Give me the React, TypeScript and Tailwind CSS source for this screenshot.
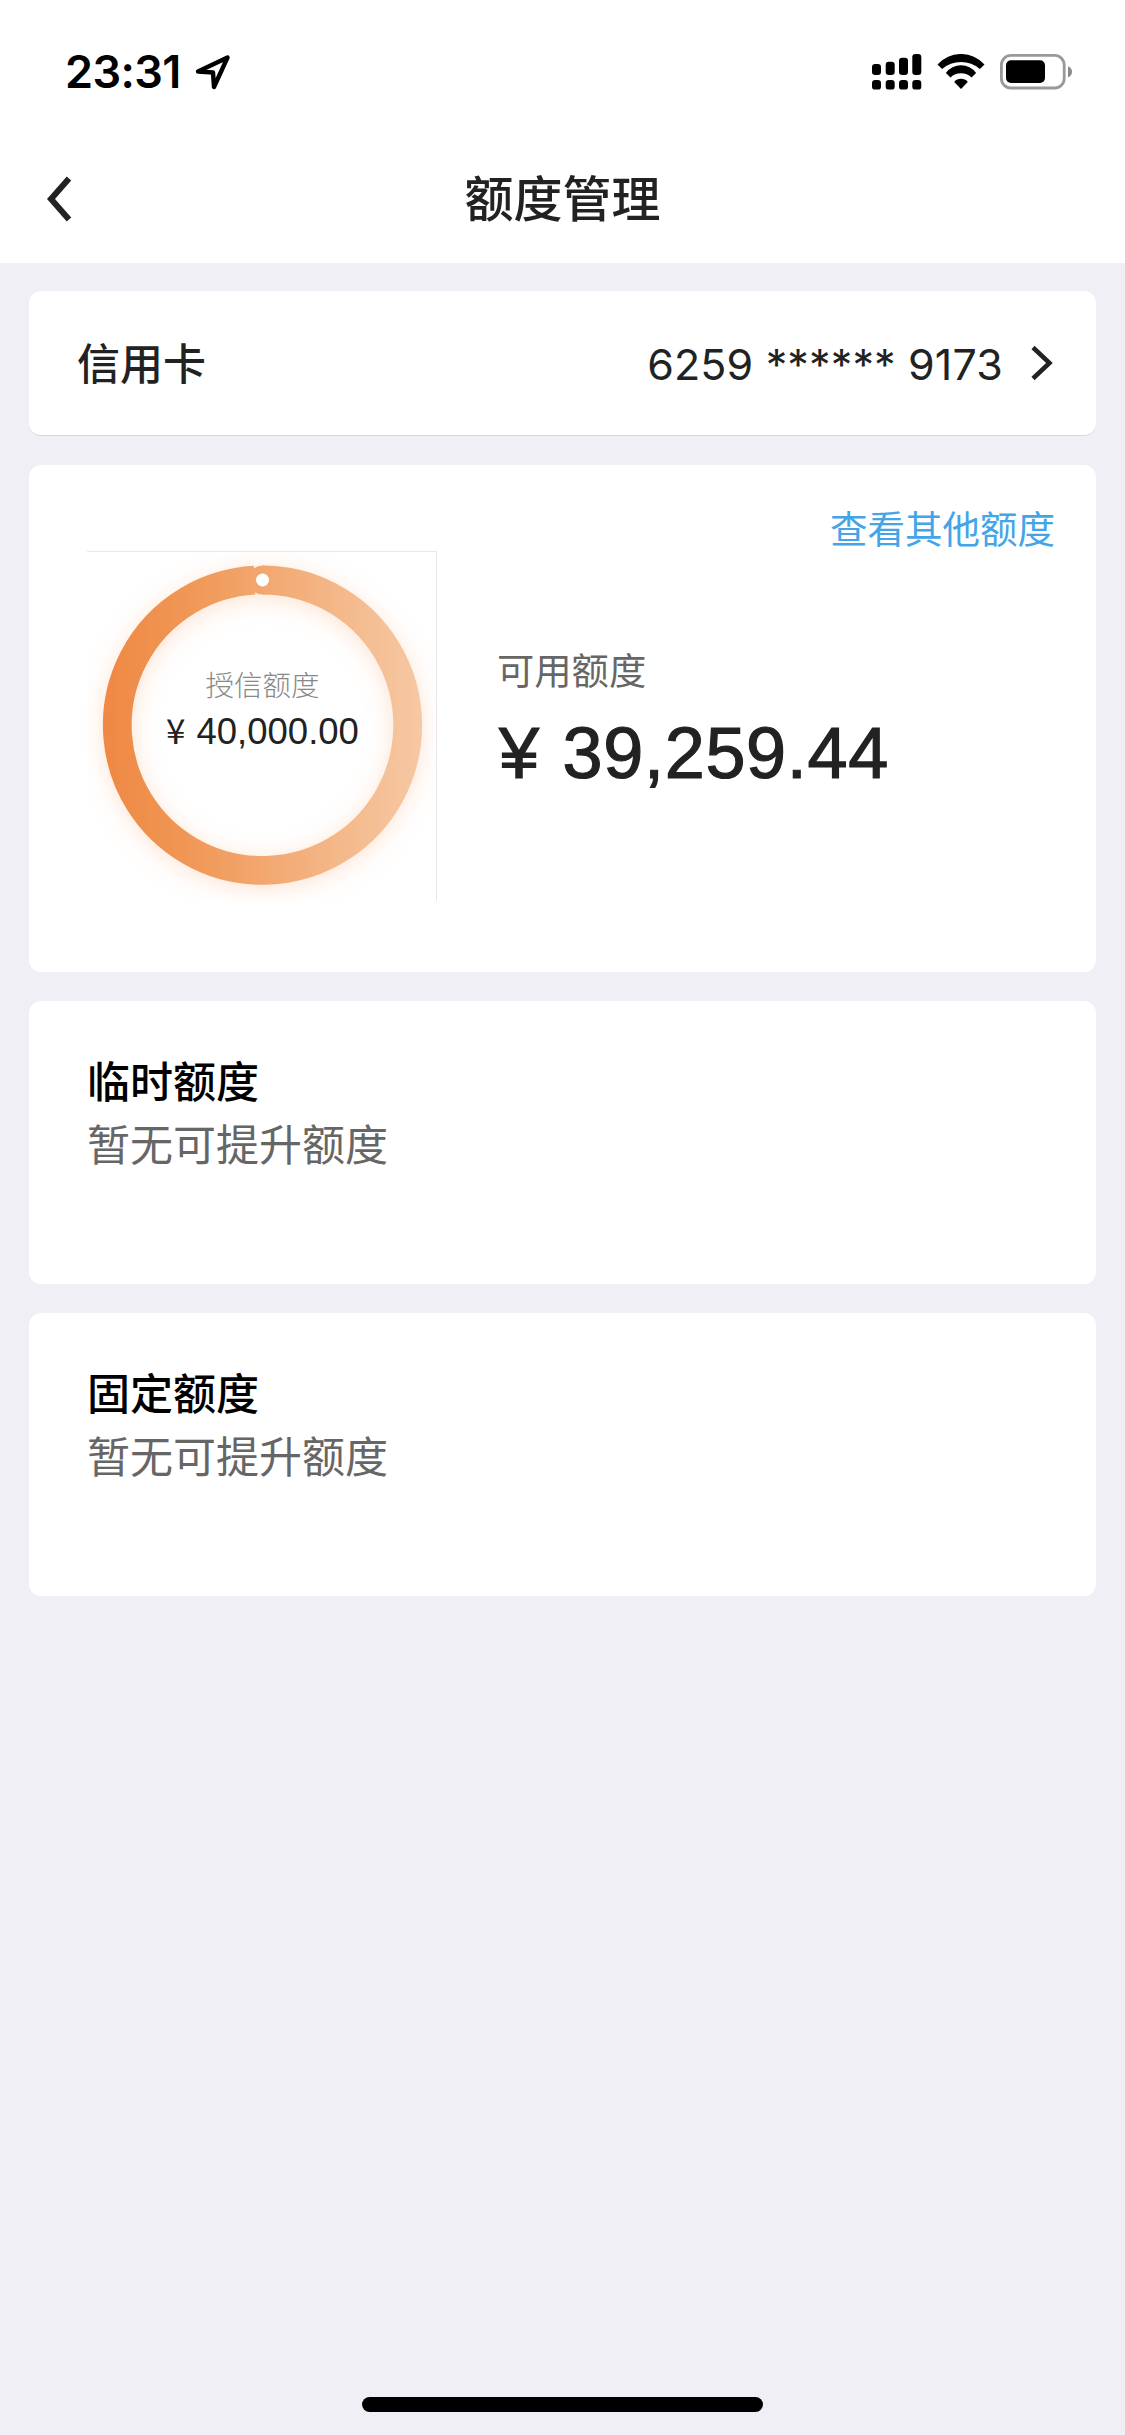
import React from 'react';

const LIMITS = [
  { title: '临时额度', text: '暂无可提升额度' },
  { title: '固定额度', text: '暂无可提升额度' },
];

const StatusBar: React.FC = () => (
  <div className="flex h-[143px] items-center justify-between pl-[65px] pr-[52px] text-black">
    <div className="flex items-center gap-[14px]">
      <span className="font-['Inter',sans-serif] text-[45px] leading-none font-semibold tracking-[-0.6px]">23:31</span>
      <svg width="36" height="36" viewBox="0 0 36 36" fill="none">
        <path d="M3 17.5 32.5 3.5 19 33 18 18.5Z" stroke="currentColor" strokeWidth="4.4" strokeLinejoin="round" />
      </svg>
    </div>
    <div className="flex items-center">
      <svg width="50" height="36" viewBox="0 0 50 36" fill="currentColor">
        <rect x="0" y="10" width="9" height="11" rx="3.2" />
        <rect x="13.7" y="7.8" width="9" height="13.2" rx="3.2" />
        <rect x="27" y="3.8" width="9" height="17.2" rx="3.2" />
        <rect x="40.3" y="0" width="9" height="21" rx="3.2" />
        <rect x="0" y="26" width="9" height="9.6" rx="3.2" />
        <rect x="13.7" y="26" width="9" height="9.6" rx="3.2" />
        <rect x="27" y="26" width="9" height="9.6" rx="3.2" />
        <rect x="40.3" y="26" width="9" height="9.6" rx="3.2" />
      </svg>
      <svg className="ml-[15px]" width="48" height="36" viewBox="0 0 48 36" fill="currentColor">
        <path d="M0.5 10.5a31.5 31.5 0 0 1 47 0l-4.6 4.6a28.7 28.7 0 0 0-37.8 0Z" />
        <path d="M8.9 18.9a18.8 18.8 0 0 1 30.2 0l-4.6 4.6a15.2 15.2 0 0 0-21 0Z" />
        <path d="M17.2 28a8.6 8.6 0 0 1 13.6 0L24 35Z" />
      </svg>
      <svg className="ml-[15px]" width="73" height="36" viewBox="0 0 73 36" fill="none">
        <rect x="1.4" y="1.4" width="62.8" height="32.6" rx="9.5" stroke="#999" strokeWidth="2.8" />
        <rect x="6" y="6.3" width="39" height="22.7" rx="5" fill="currentColor" />
        <path d="M68 12.2c2.6.9 4 3 4 5.5s-1.4 4.7-4 5.6Z" fill="#8a8a8a" />
      </svg>
    </div>
  </div>
);

const LimitRing: React.FC = () => (
  <div className="relative h-[350px] w-[350px] border-t border-r border-[#e9e9e9]">
    <svg className="block" width="349" height="349" viewBox="0 0 349 349" fill="none">
      <defs>
        <linearGradient id="ring" gradientUnits="userSpaceOnUse" x1="16" y1="0" x2="336" y2="0">
          <stop offset="0" stopColor="#ef8844" />
          <stop offset="0.25" stopColor="#f09654" />
          <stop offset="0.5" stopColor="#f2a76f" />
          <stop offset="0.75" stopColor="#f4b98b" />
          <stop offset="1" stopColor="#f6c8a4" />
        </linearGradient>
        <filter id="glow" x="-20%" y="-20%" width="140%" height="140%">
          <feGaussianBlur stdDeviation="12" />
        </filter>
      </defs>
      <circle cx="175.5" cy="177" r="145" stroke="#f9a66f" strokeOpacity="0.32" strokeWidth="28" filter="url(#glow)" />
      {/* used part of the limit, the start is marked with a dot */}
      <path d="M175.5 28A145.2 145.2 0 1 1 167.5 28.22" stroke="url(#ring)" strokeWidth="28.8" />
      <circle cx="175.5" cy="28" r="14.4" fill="url(#ring)" />
      <circle cx="175.5" cy="28" r="6.5" fill="#fff" />
    </svg>
    <div className="absolute inset-x-0 top-[112px] flex flex-col items-center pl-[2px]">
      <span className="text-[28.5px] leading-[40px] font-light text-[#888]">授信额度</span>
      <span className="mt-[3px] flex items-baseline gap-[11px] leading-[44px] text-[#222]">
        <span className="text-[35px]">¥</span>
        <span className="font-['Liberation_Sans',sans-serif] text-[36.5px]">40,000.00</span>
      </span>
    </div>
  </div>
);

export default function App() {
  return (
    <div className="flex h-[2435px] w-[1125px] flex-col bg-[#efeff5] font-['Noto_Sans_CJK_SC',sans-serif] text-[#222]">
      <header className="h-[263px] bg-white">
        <StatusBar />
        <div className="grid h-[112px] grid-cols-[1fr_auto_1fr] items-center">
          <svg className="ml-[46px]" width="28" height="48" viewBox="0 0 28 48" fill="none">
            <path d="M23 3.5 5 24l18 20.5" stroke="currentColor" strokeWidth="6" />
          </svg>
          <h1 className="pb-[7px] text-[49px] leading-none font-medium">额度管理</h1>
        </div>
      </header>

      <main className="flex flex-col gap-[29px] px-[29px] pt-[28px]">
        <section className="flex h-[145px] items-center rounded-xl border-b border-[#d6d6dc] bg-white pl-[48px] pr-[41px]">
          <h2 className="flex-1 pb-[3px] text-[43px] leading-none font-medium">信用卡</h2>
          <span className="pt-[2px] font-['Inter',sans-serif] text-[43px] leading-none tracking-[0.15px]">6259 ****** 9173</span>
          <svg className="ml-[26px]" width="26" height="38" viewBox="0 0 26 38" fill="none">
            <path d="M4 3.5 20.5 19 4 34.5" stroke="currentColor" strokeWidth="4.5" />
          </svg>
        </section>

        <section className="flex h-[507px] flex-col rounded-xl bg-white pl-[58px] pr-[41px] pt-[40px]">
          <a className="self-end text-[37.5px] leading-[44px] text-[#43a5e8]">查看其他额度</a>
          <div className="mt-[2px] flex">
            <LimitRing />
            <div className="ml-[60px] pt-[96px]">
              <p className="text-[37.3px] leading-[44px] text-[#666]">可用额度</p>
              <p className="mt-[20px] pl-[2px] font-['Liberation_Sans',sans-serif] text-[72px] leading-[84px] tracking-[0.7px] [-webkit-text-stroke:1.2px_#222] [word-spacing:2px]">
                ¥ 39,259.44
              </p>
            </div>
          </div>
        </section>

        {LIMITS.map((item) => (
          <section key={item.title} className="h-[283px] rounded-xl bg-white px-[58px] pt-[46px]">
            <h2 className="text-[43px] leading-[64px] font-medium text-black">{item.title}</h2>
            <p className="text-[43px] leading-[63px] text-[#666]">{item.text}</p>
          </section>
        ))}
      </main>

      <div className="mt-auto mb-[23px] h-[15px] w-[401px] self-center rounded-full bg-black" />
    </div>
  );
}
